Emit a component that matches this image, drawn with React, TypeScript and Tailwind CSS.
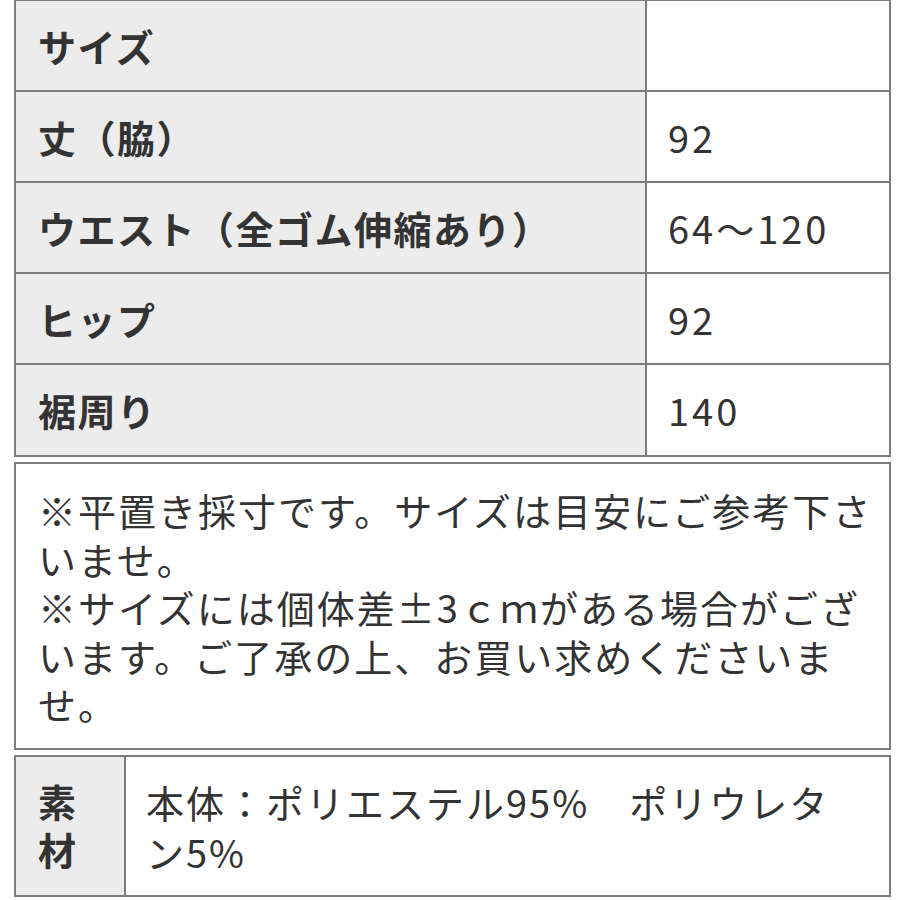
const rows: { label: string; value: string }[] = [
  { label: "サイズ", value: "" },
  { label: "丈（脇）", value: "92" },
  { label: "ウエスト（全ゴム伸縮あり）", value: "64〜120" },
  { label: "ヒップ", value: "92" },
  { label: "裾周り", value: "140" },
];

const font = { fontFamily: '"Noto Sans CJK JP", "Noto Sans", sans-serif' };

export default function App() {
  return (
    <div className="w-[900px] h-[900px] bg-white overflow-hidden text-[#333333]" style={font}>
      <div className="ml-[14px] w-[877px] -mt-px">
        <div className="border-2 border-[#7c7c7c]">
          {rows.map((r, i) => (
            <div
              key={r.label}
              className={`flex ${i < rows.length - 1 ? "h-[91px] border-b-2 border-[#7c7c7c]" : "h-[90px]"}`}
            >
              <div className="w-[631px] shrink-0 bg-[#ececec] border-r-2 border-[#7c7c7c] flex items-center pl-[22px] text-[38px] font-bold leading-none tracking-[1.5px]">
                {r.label}
              </div>
              <div className="flex-1 flex items-center pl-[21px] text-[38px] leading-none tracking-[3px]">
                {r.value}
              </div>
            </div>
          ))}
        </div>

        <div className="mt-[5px] border-2 border-[#7c7c7c] pl-[22px] pt-[22px] pb-[19px] text-[38px] leading-[48.5px] tracking-[2px] whitespace-nowrap">
          ※平置き採寸です。サイズは目安にご参考下さ
          <br />
          いませ。
          <br />
          ※サイズには個体差±3ｃｍがある場合がござ
          <br />
          います。ご了承の上、お買い求めくださいま
          <br />
          せ。
        </div>

        <div className="mt-[5px] border-2 border-[#7c7c7c] flex">
          <div className="w-[110px] shrink-0 bg-[#ececec] border-r-2 border-[#7c7c7c] pl-[22px] pt-[20px] pb-[22px] text-[38px] font-bold leading-[48px]">
            素
            <br />
            材
          </div>
          <div className="flex-1 pl-[20px] pt-[20px] text-[38px] leading-[50px] tracking-[2px] whitespace-nowrap">
            本体：ポリエステル95%　ポリウレタ
            <br />
            ン5%
          </div>
        </div>
      </div>
    </div>
  );
}
